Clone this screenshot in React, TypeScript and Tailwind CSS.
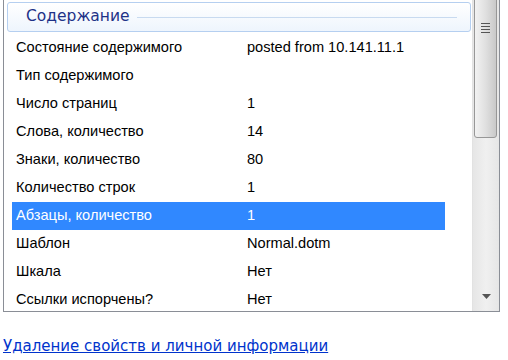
const rows: [string, string][] = [
  ["Состояние содержимого", "posted from 10.141.11.1"],
  ["Тип содержимого", ""],
  ["Число страниц", "1"],
  ["Слова, количество", "14"],
  ["Знаки, количество", "80"],
  ["Количество строк", "1"],
  ["Абзацы, количество", "1"],
  ["Шаблон", "Normal.dotm"],
  ["Шкала", "Нет"],
  ["Ссылки испорчены?", "Нет"],
];

const listFont = { fontFamily: "'Liberation Sans', Arial, sans-serif" };
const uiFont = { fontFamily: "'DejaVu Sans', Verdana, sans-serif" };

export default function App() {
  return (
    <div className="h-[360px] w-[508px] overflow-hidden bg-white text-black">
      <div className="ml-[3px] flex h-[312px] w-[497px] border-x border-b border-[#8a8e96]">
        {/* Property list */}
        <div className="flex-1 overflow-hidden">
          <div className="ml-[3px] mr-[1px] mt-[2px] flex h-[30px] items-center rounded-[3px] border border-[#b5cff0] bg-gradient-to-b from-white to-[#eef5fd] pl-[18px] pr-[13px]">
            <span className="text-[15.5px] text-[#1e3287]" style={uiFont}>
              Содержание
            </span>
            <div className="ml-[7px] h-px flex-1 bg-[#c8daf0]" />
          </div>
          <div className="mt-[2px] text-[14.6px]" style={listFont}>
            {rows.map(([k, v], i) => {
              const sel = i === 6;
              return (
                <div
                  key={k}
                  className={
                    sel
                      ? "ml-[8px] mr-[27px] flex h-[28px] items-center bg-[#3088ff] pl-[4px] text-white"
                      : "ml-[8px] mr-[27px] flex h-[28px] items-center pl-[4px]"
                  }
                >
                  <span className="w-[231px] shrink-0 whitespace-nowrap">{k}</span>
                  <span className="whitespace-nowrap">{v}</span>
                </div>
              );
            })}
          </div>
        </div>

        {/* Scrollbar */}
        <div className="relative flex w-[27px] flex-col border-l border-[#e2e2e2] bg-gradient-to-r from-[#e6e6e6] via-[#f0f0f0] to-[#e6e6e6]">
          <div className="ml-[1px] mt-[-4px] flex h-[142px] w-[23px] flex-col items-center rounded-[3px] border border-[#979797] bg-gradient-to-r from-[#f2f2f2] via-[#e0e0e0] to-[#c9c9c9]">
            <div className="mt-[26px] flex flex-col gap-[2px]">
              <div className="h-px w-[9px] bg-[#555]" />
              <div className="h-px w-[9px] bg-[#555]" />
              <div className="h-px w-[9px] bg-[#555]" />
              <div className="h-px w-[9px] bg-[#555]" />
            </div>
          </div>
          <div className="flex-1" />
          <div className="mb-[12px] flex justify-center">
            <svg width="9" height="5" viewBox="0 0 9 5">
              <path d="M0 0h9L4.5 5z" fill="#555" />
            </svg>
          </div>
        </div>
      </div>

      <div className="ml-[3px] mt-[21px]">
        <span className="cursor-pointer text-[15px] text-[#0033cc] underline" style={uiFont}>
          Удаление свойств и личной информации
        </span>
      </div>
    </div>
  );
}
